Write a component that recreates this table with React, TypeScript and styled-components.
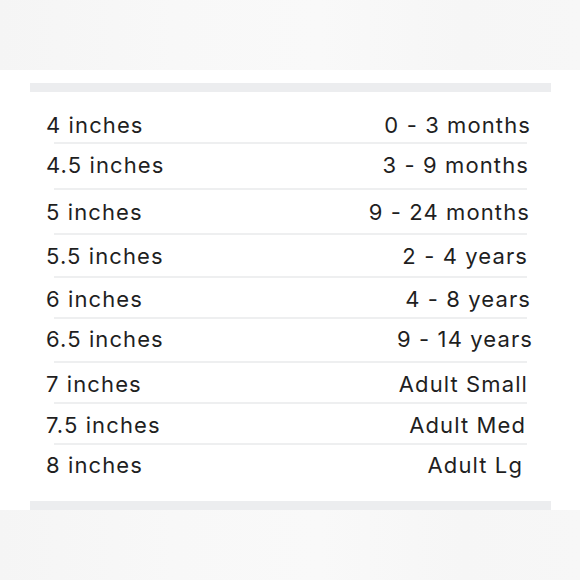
import React from "react";
import styled, { createGlobalStyle } from "styled-components";

const Global = createGlobalStyle`
  html, body { margin: 0; padding: 0; background: #ffffff; }
  body { font-family: Inter, "Noto Sans", sans-serif; }
`;

const Page = styled.div`
  width: 580px;
  height: 580px;
  display: flex;
  flex-direction: column;
  overflow: hidden;
`;

const Band = styled.div<{ $h: number }>`
  height: ${(p) => p.$h}px;
  flex: none;
  background: linear-gradient(90deg, #f5f5f5 0%, #f8f8f8 30%, #f9f9f9 55%, #f6f6f6 80%, #f7f7f7 100%);
`;

const Card = styled.div`
  flex: none;
  height: 440px;
  background: #ffffff;
  padding: 13px 29px 0 30px;
  box-sizing: border-box;
  display: flex;
  flex-direction: column;
`;

const Bar = styled.div`
  height: 9px;
  background: #ecedef;
  flex: none;
`;

const Table = styled.div`
  display: flex;
  flex-direction: column;
  padding-left: 16px;
  margin-right: 18px;
  flex: 1;
`;

const Row = styled.div<{ $h: number; $pt: number }>`
  height: ${(p) => p.$h}px;
  padding-top: ${(p) => p.$pt}px;
  box-sizing: border-box;
  display: flex;
  justify-content: space-between;
  align-items: flex-start;
  font-size: 22px;
  line-height: 24px;
  color: #1f1f1f;
  letter-spacing: 1.1px;
`;

const Size = styled.span`
  white-space: nowrap;
`;

const Age = styled.span<{ $shift: number }>`
  white-space: nowrap;
  margin-right: ${(p) => p.$shift}px;
`;

const Separator = styled.div`
  height: 2px;
  background: #eeeff0;
  margin: 0 6px 0 8px;
  flex: none;
`;

type Item = { size: string; age: string; h: number; pt: number; shift: number };

const rows: Item[] = [
  { size: "4 inches", age: "0 - 3 months", h: 50, pt: 21, shift: 2 },
  { size: "4.5 inches", age: "3 - 9 months", h: 44, pt: 9, shift: 4 },
  { size: "5 inches", age: "9 - 24 months", h: 43, pt: 10, shift: 3 },
  { size: "5.5 inches", age: "2 - 4 years", h: 41, pt: 9, shift: 5 },
  { size: "6 inches", age: "4 - 8 years", h: 39, pt: 9, shift: 2 },
  { size: "6.5 inches", age: "9 - 14 years", h: 42, pt: 8, shift: 0 },
  { size: "7 inches", age: "Adult Small", h: 39, pt: 9, shift: 5 },
  { size: "7.5 inches", age: "Adult Med", h: 39, pt: 9, shift: 7 },
  { size: "8 inches", age: "Adult Lg", h: 54, pt: 8, shift: 10 },
];

export default function App() {
  return (
    <Page>
      <Global />
      <Band $h={70} />
      <Card>
        <Bar />
        <Table>
          {rows.map((r, i) => (
            <React.Fragment key={r.size}>
              <Row $h={r.h} $pt={r.pt}>
                <Size>{r.size}</Size>
                <Age $shift={r.shift}>{r.age}</Age>
              </Row>
              {i < rows.length - 1 && <Separator />}
            </React.Fragment>
          ))}
        </Table>
        <Bar />
      </Card>
      <Band $h={70} />
    </Page>
  );
}
